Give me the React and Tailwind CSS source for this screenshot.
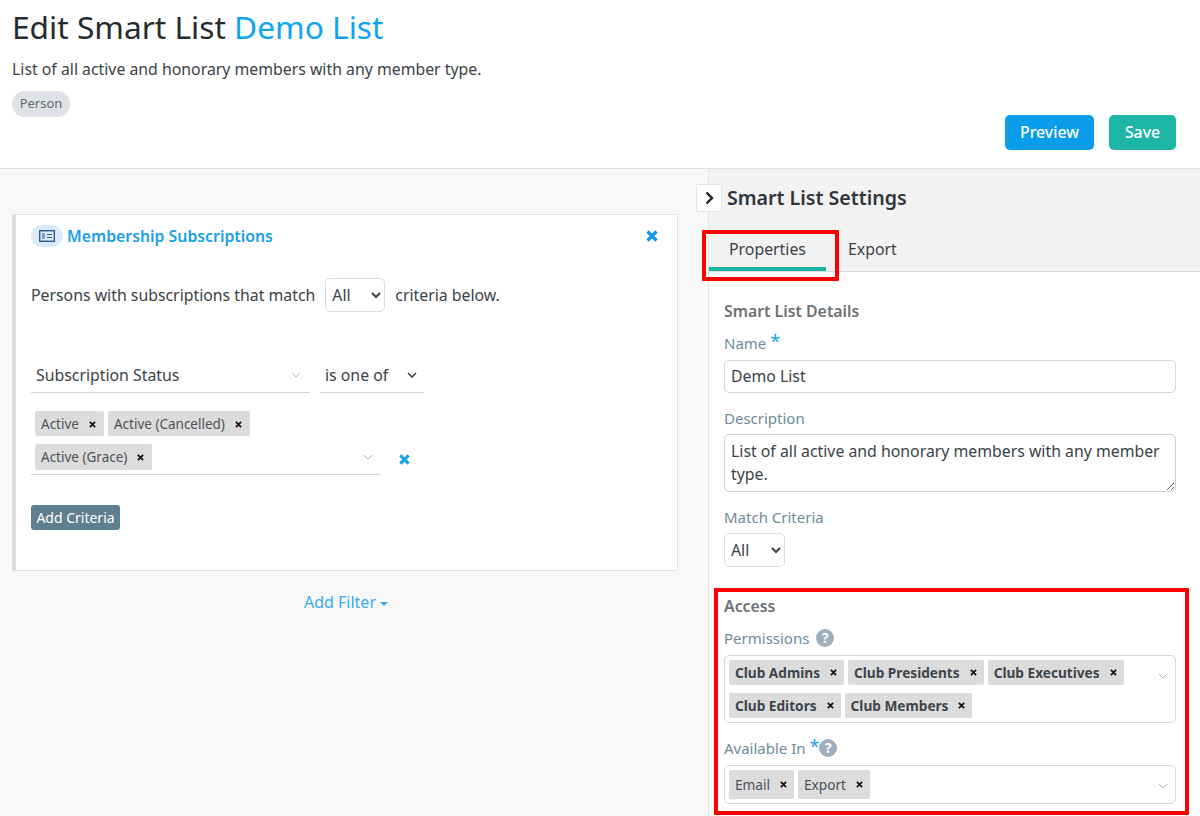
const Chevron = ({ className = "" }) => (
  <svg width="10" height="6" viewBox="0 0 10 6" className={className} fill="none" stroke="#b5b8ba" strokeWidth="1">
    <path d="M1 1l4 4 4-4" />
  </svg>
);

const X = ({ size = 8, color = "#222", width = 2 }) => (
  <svg width={size} height={size} viewBox="0 0 8 8" fill="none" stroke={color} strokeWidth={width}>
    <path d="M1 1l6 6M7 1L1 7" />
  </svg>
);

const Tag = ({ label, bold, gap = "ml-[10px]", h = "h-[25px]", size = "text-[13.65px] pr-[7px]" }) => (
  <span className={`inline-flex items-center ${h} bg-[#dcdcdc] rounded-[2px] pl-[6px] ${size} leading-none ${bold ? "font-bold text-[#3e454b]" : "text-[#4c5358]"}`}>
    {label}
    <span className={`${gap} inline-flex -mt-[1px]`}><X size={7} color="#111" /></span>
  </span>
);

const Help = () => (
  <span className="inline-flex items-center justify-center w-[18px] h-[18px] rounded-full bg-[#9fb0bc] text-white text-[14px] font-bold leading-none">?</span>
);

const Star = () => <span className="text-[#1ba1e6] text-[18px] leading-none relative -top-[2px]">*</span>;

const Label = ({ children, className = "" }) => (
  <div className={`text-[15px] leading-[20px] text-[#6f8b9b] flex items-center ${className}`}>{children}</div>
);

export default function App() {
  return (
    <div className="relative w-[1200px] h-[816px] overflow-hidden bg-white text-[#3b4247] font-['Noto_Sans',sans-serif]">
      <header className="h-[169px] border-b border-[#dfe0e1] px-3 flex flex-col">
        <h1 className="text-[31.68px] leading-[40px] mt-[7px] text-[#262b30]">
          Edit Smart List <span className="text-[#0ea5ee]">Demo List</span>
        </h1>
        <p className="text-[15.84px] leading-[20px] mt-[12px] text-[#3b4247]">List of all active and honorary members with any member type.</p>
        <div className="mt-[12px] w-[58px] h-[26px] rounded-full bg-[#dee2e6] text-[13px] text-[#616d78] flex items-center justify-center">Person</div>
        <div className="flex justify-end gap-[15px] pr-[12px] -mt-[2px]">
          <button className="h-[35px] w-[89px] rounded-[5px] bg-[#0a9de9] text-white text-[15.84px] font-medium">Preview</button>
          <button className="h-[35px] w-[67px] rounded-[5px] bg-[#1cb5a6] text-white text-[15.84px] font-medium">Save</button>
        </div>
      </header>

      <div className="flex h-[647px]">
        <main className="w-[708px] bg-[#f8f8f8] px-3 pt-[45px]">
          <section className="w-[666px] h-[357px] bg-white border border-[#e3e3e3] border-l-[4px] border-l-[#dcdcdc] rounded-[2px] pl-[15px] pr-[15px] pt-[10px] flex flex-col">
            <div className="flex items-center h-[22px] pr-[4px]">
              <span className="w-[32px] h-[22px] rounded-full bg-[#dbe9f8] flex items-center justify-center">
                <svg width="16" height="12" viewBox="0 0 16 12" fill="none">
                  <rect x="0.7" y="0.7" width="14.6" height="10.6" stroke="#2d5a8e" strokeWidth="1.4" />
                  <path d="M3 4h3M3 6h3M3 8h3M8 4.5h5M8 7.5h5" stroke="#2d5a8e" strokeWidth="1.2" />
                </svg>
              </span>
              <span className="ml-[4px] pt-[2px] text-[15.84px] font-semibold text-[#1aa0e6]">Membership Subscriptions</span>
              <span className="ml-auto inline-flex"><X size={12} color="#0f9be6" width={2.2} /></span>
            </div>

            <div className="flex items-center mt-[31px] text-[15.84px]">
              <span className="pt-[2px]">Persons with subscriptions that match</span>
              <select defaultValue="All" className="ml-[10px] w-[60px] h-[34px] pl-[2px] bg-white border border-[#dcdcdc] rounded-[5px] text-[15.84px] text-[#3b4247]">
                <option>All</option>
              </select>
              <span className="ml-[10px] pt-[2px]">criteria below.</span>
            </div>

            <div className="flex mt-[46px] gap-[10px] text-[15.84px]">
              <div className="w-[279px] h-[35px] border-b border-[#d3d3d3] pl-[5px] pr-[9px] flex items-center justify-between">
                <span className="pt-[2px]">Subscription Status</span>
                <Chevron />
              </div>
              <div className="w-[104px] h-[35px] border-b border-[#d3d3d3] pl-[5px] pr-[5px] flex items-center justify-between">
                <span className="pt-[2px]">is one of</span>
                <svg width="10" height="6" viewBox="0 0 10 6" fill="none" stroke="#333" strokeWidth="1.4" className="mr-[2px]"><path d="M1 1l4 4 4-4" /></svg>
              </div>
            </div>

            <div className="flex items-end mt-[18px]">
              <div className="relative w-[349px] h-[64px] border-b border-[#d3d3d3] pl-[4px] pr-[90px] flex flex-wrap content-start gap-x-[4px] gap-y-[8px]">
                <Tag size="text-[13.5px] pr-[8px] pt-[2px]" label="Active" />
                <Tag size="text-[13.5px] pr-[8px] pt-[2px]" label="Active (Cancelled)" />
                <Tag size="text-[13.5px] pr-[8px] pt-[2px]" label="Active (Grace)" h="h-[26px]" />
                <Chevron className="absolute right-[7px] top-[43px]" />
              </div>
              <span className="ml-[19px] mb-[10px] inline-flex"><X size={11} color="#1aa0e6" width={2.2} /></span>
            </div>

            <button className="mt-[30px] w-[89px] h-[25px] rounded-[3px] bg-[#5f7f90] text-white text-[14px] leading-none">Add Criteria</button>
          </section>

          <div className="mt-[19px] flex justify-center items-center text-[16px] text-[#38a9ee] w-[668px]">
            Add Filter
            <span className="ml-[4px] mt-[3px] w-0 h-0 border-x-[4px] border-x-transparent border-t-[4px] border-t-[#38a9ee]" />
          </div>
        </main>

        <aside className="w-[492px] border-l border-[#e3e3e3] flex flex-col">
          <div className="h-[103px] bg-[#f2f2f2] border-b border-[#dcdcdc] flex flex-col">
            <div className="h-[58px] flex items-center pl-[18px] text-[19.6px] font-semibold text-[#2f353a] relative">
              Smart List Settings
            </div>
            <div className="flex text-[15.84px] text-[#3b4247] h-[44px]">
              <div className="w-[117px] h-[44px] border-b-[4px] border-[#1cb5a6] flex justify-center pt-[11px]">Properties</div>
              <div className="ml-[22px] pt-[11px]">Export</div>
            </div>
          </div>

          <div className="px-[15px] pt-[29px] flex flex-col">
            <div className="text-[15.84px] leading-[20px] font-semibold text-[#6d7175]">Smart List Details</div>
            <Label className="mt-[12px] gap-[4px]">Name <Star /></Label>
            <input readOnly value="Demo List" className="mt-[7px] w-[452px] h-[33px] border border-[#d8d8d8] rounded-[5px] px-[6px] pb-[2px] text-[15.84px] text-[#3b4247]" />
            <Label className="mt-[15px]">Description</Label>
            <textarea readOnly value="List of all active and honorary members with any member type." className="mt-[6px] w-[452px] h-[58px] border border-[#cfcfcf] rounded-[5px] px-[6px] py-[5px] text-[15.84px] leading-[23px] text-[#3b4247]" />
            <Label className="mt-[15px]">Match Criteria</Label>
            <select defaultValue="All" className="mt-[6px] w-[61px] h-[34px] pl-[2px] bg-white border border-[#dcdcdc] rounded-[5px] text-[15.84px] text-[#3b4247]">
              <option>All</option>
            </select>

            <div className="mt-[29px] text-[15.84px] leading-[20px] font-semibold text-[#6d7175]">Access</div>
            <Label className="mt-[12px] gap-[7px]">Permissions <Help /></Label>
            <div className="relative mt-[7px] w-[452px] h-[68px] border border-[#d8d8d8] rounded-[5px] pl-[4px] pt-[4px] flex flex-wrap content-start gap-x-[4px] gap-y-[8px] pr-[30px]">
              <Tag bold label="Club Admins" />
              <Tag bold label="Club Presidents" />
              <Tag bold label="Club Executives" />
              <Tag bold label="Club Editors" />
              <Tag bold label="Club Members" />
              <Chevron className="absolute right-[7px] top-[17px]" />
            </div>
            <Label className="mt-[15px]">Available In&nbsp;<Star /><Help /></Label>
            <div className="relative mt-[7px] w-[452px] h-[39px] border border-[#d8d8d8] rounded-[5px] pl-[4px] pt-[4px] flex gap-[4px]">
              <Tag label="Email" h="h-[29px]" />
              <Tag label="Export" h="h-[29px]" />
              <Chevron className="absolute right-[7px] top-[17px]" />
            </div>
          </div>
        </aside>
      </div>

      <button className="absolute left-[696px] top-[184px] w-[26px] h-[28px] bg-white border border-[#e5e5e5] rounded-[2px] flex items-center justify-center">
        <svg width="9" height="14" viewBox="0 0 9 14" fill="none" stroke="#1d2226" strokeWidth="2.4"><path d="M1.5 1.5L7 7l-5.5 5.5" /></svg>
      </button>
      <div className="absolute left-[702px] top-[230px] w-[137px] h-[51px] border-[4px] border-[#ff0000] rounded-[1px]" />
      <div className="absolute left-[714px] top-[588px] w-[475px] h-[227px] border-[4px] border-[#ff0000] rounded-[1px]" />
    </div>
  );
}
